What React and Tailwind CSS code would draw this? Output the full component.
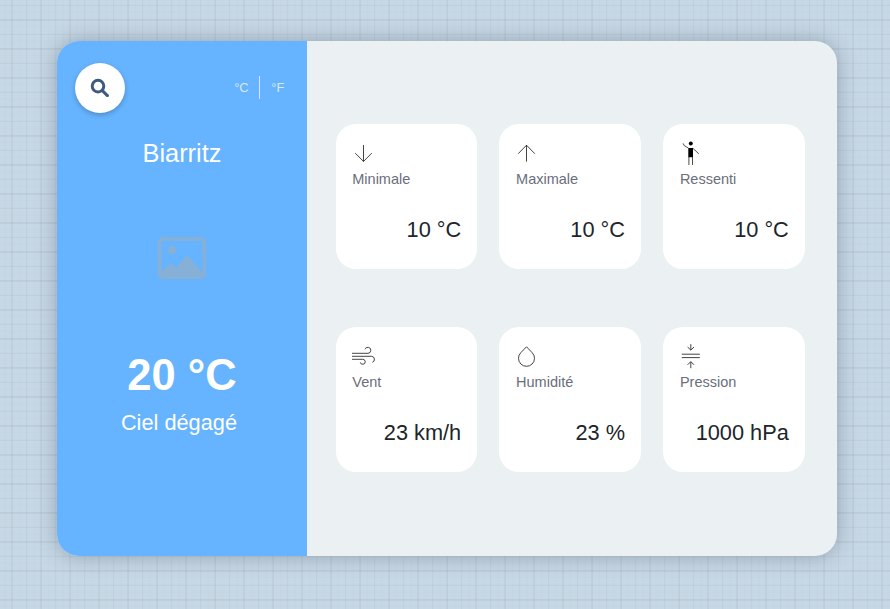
const grid = {
  backgroundColor: '#c6d7e6',
  backgroundImage: [
    'linear-gradient(90deg, rgba(160,170,172,.15) 2px, transparent 2px)',
    'linear-gradient(rgba(160,170,172,.20) 2px, transparent 2px)',
    'linear-gradient(90deg, rgba(160,170,172,.10) 1px, transparent 1px)',
    'linear-gradient(rgba(160,170,172,.15) 1px, transparent 1px)',
    'linear-gradient(90deg, rgba(160,170,172,.07) 1px, transparent 1px)',
    'linear-gradient(rgba(160,170,172,.05) 1px, transparent 1px)',
  ].join(','),
  backgroundSize: '29px 29px, 29px 29px, 29px 29px, 29px 29px, 7.25px 7.25px, 7.25px 7.25px',
  backgroundPosition: '11px 19px, 11px 19px, 26px 5px, 26px 5px, 12px 19px, 12px 19px',
};

const icons = {
  down: (
    <path d="M11.5 3V19.6M3.2 11.1l8.3 8.3 8.3-8.3" />
  ),
  up: (
    <path d="M11.5 19.6V3.1M3.2 11.7l8.3-8.5 8.3 8.5" />
  ),
  person: (
    <g>
      <circle cx="11.8" cy="1.6" r="2" fill="black" stroke="none" />
      <path d="M9.3 6h4.7v9.2H9.3z" fill="black" stroke="none" />
      <path d="M9.5 6.2L5.2 3.6 4.1 1.4M13.8 6.2l6 5.6M9.9 15v8M13.5 15v8" strokeWidth="0.8" />
    </g>
  ),
  wind: (
    <path d="M0 8.3h16a3 3 0 1 0-3-4M0 11.3h19.6a3.1 3.1 0 0 1 .8 6M0 14.3h10.8a2.5 2.5 0 1 1-2.5 3.1" />
  ),
  drop: (
    <path d="M11.5 1.8l5.7 5.9a8 8 0 1 1-11.4 0z" />
  ),
  pressure: (
    <path d="M11.8-.8v5.7M8.6 2l3.2 3.1 3.2-3.1M2.8 9.2h18M2.8 12.6h18M11.8 23.2v-6.2M8.6 19.8l3.2-3.2 3.2 3.2" />
  ),
};

const cards = [
  ['Minimale', '10 °C', 'down'],
  ['Maximale', '10 °C', 'up'],
  ['Ressenti', '10 °C', 'person'],
  ['Vent', '23 km/h', 'wind'],
  ['Humidité', '23 %', 'drop'],
  ['Pression', '1000 hPa', 'pressure'],
];

function Card({ label, value, icon }) {
  return (
    <div className="flex h-[145px] flex-col rounded-[20px] bg-white px-4 pt-[17.5px]">
      <svg className="h-6 w-6 overflow-visible" viewBox="0 0 24 24" fill="none" stroke="#222" strokeWidth="0.85">
        {icons[icon]}
      </svg>
      <div className="mt-[2.5px] ml-[0.6px] text-[14.5px] leading-[22px] text-[#6b6e7b]">{label}</div>
      <div className="mt-[23px] text-right text-[21.75px] leading-[33px] text-[#212529]">{value}</div>
    </div>
  );
}

export default function App() {
  return (
    <div
      className="h-[609px] w-[890px] overflow-hidden pt-[40.7px] pl-[56.7px] font-['Liberation_Sans',Arial,sans-serif]"
      style={grid}
    >
      <main className="flex h-[515px] w-[780px] overflow-hidden rounded-[22px] bg-[#ebf0f3] shadow-[0_0_20px_rgba(60,75,90,0.38)]">
        <aside className="flex w-[250px] flex-col items-center bg-[#66b3ff] text-white">
          <div className="flex w-full items-center justify-between pt-[22px] pr-[22.3px] pl-[18px]">
            <button className="flex h-[50.5px] w-[50.5px] items-center justify-center rounded-full bg-white shadow-[0_2px_5px_rgba(0,0,0,0.22)]">
              <svg className="h-[19px] w-[19px]" viewBox="0 0 19 19" fill="none" stroke="#3d5a80" strokeWidth="3" strokeLinecap="round">
                <circle cx="8" cy="8.1" r="5.8" />
                <path d="M12.4 12.6l5 5" />
              </svg>
            </button>
            <div className="flex items-center text-[13px] text-[#d6e8fa]">
              <span>°C</span>
              <span className="mr-[11.5px] ml-[10px] h-[23px] w-px bg-[#d6e8fa]" />
              <span>°F</span>
            </div>
          </div>
          <h1 className="mt-[20px] ml-[0.5px] text-[25.375px] leading-[40px]">Biarritz</h1>
          <svg className="mt-[64px] h-[42px] w-[49px]" viewBox="0 0 49 42">
            <rect x="2.5" y="2" width="45" height="38" rx="4" fill="none" stroke="#87b0d7" strokeWidth="4" />
            <circle cx="15" cy="13" r="4.5" fill="#87b0d7" />
            <path d="M3 36l11-10 5 5 11-13 16 18v4H3z" fill="#87b0d7" />
          </svg>
          <div className="mt-[67.7px] ml-[0.6px] text-[43.5px] leading-[56px] font-bold">20 °C</div>
          <div className="mt-[3px] mr-[5.5px] text-[21.75px] leading-[33px]">Ciel dégagé</div>
        </aside>
        <section className="grid flex-1 grid-cols-[141.5px_141.5px_141.5px] content-start gap-x-[22.3px] gap-y-[58px] pt-[83.7px] pl-[29px]">
          {cards.map(([label, value, icon]) => (
            <Card key={label} label={label} value={value} icon={icon} />
          ))}
        </section>
      </main>
    </div>
  );
}
